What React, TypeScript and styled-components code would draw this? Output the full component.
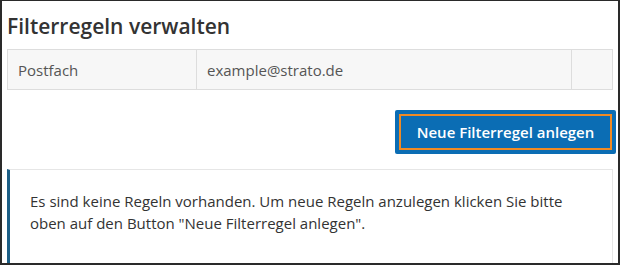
import styled, { createGlobalStyle } from 'styled-components';

const GlobalStyle = createGlobalStyle`
    html, body {
        margin: 0;
        padding: 0;
        background: #ffffff;
    }
`;

const Frame = styled.div`
    box-sizing: border-box;
    width: 620px;
    height: 265px;
    overflow: hidden;
    border: 2px solid #2a2a2a;
    border-top-width: 1px;
    padding: 0 5px 0 5px;
    font-family: 'Open Sans', 'DejaVu Sans', sans-serif;
    color: #333333;
    background: #ffffff;
`;

const Title = styled.h1`
    margin: 11px 0 0 0;
    font-size: 21px;
    line-height: 28px;
    font-weight: 600;
    color: #333333;
`;

const InfoTable = styled.div`
    display: grid;
    grid-template-columns: 189px 375px 1fr;
    margin-top: 9px;
    width: 606px;
    height: 41px;
    box-sizing: border-box;
    border: 1px solid #dddddd;
    background: #f7f7f7;
`;

const Cell = styled.div<{ $last?: boolean }>`
    display: flex;
    align-items: center;
    padding-left: 10px;
    font-size: 15px;
    color: #555555;
    border-right: ${(p) => (p.$last ? 'none' : '1px solid #dddddd')};
`;

const Actions = styled.div`
    display: flex;
    justify-content: flex-end;
    margin-top: 20px;
    margin-right: -3px;
`;

const PrimaryButton = styled.button`
    width: 221px;
    height: 44px;
    box-sizing: border-box;
    padding: 4px;
    border: none;
    border-radius: 2px;
    background: #0b6db4;
    cursor: pointer;

    span {
        display: flex;
        align-items: center;
        justify-content: center;
        height: 100%;
        box-sizing: border-box;
        border: 2px solid #f08a24;
        font-family: 'Open Sans', 'DejaVu Sans', sans-serif;
        font-size: 15px;
        font-weight: 600;
        color: #ffffff;
    }
`;

const Notice = styled.div`
    margin-top: 15px;
    width: 606px;
    height: 120px;
    box-sizing: border-box;
    border: 1px solid #e6e6e6;
    border-left: 3px solid #1d5f86;
    padding: 20px 20px 0 20px;
    font-size: 15px;
    line-height: 22px;
    color: #333333;
`;

export default function App() {
    return (
        <>
            <GlobalStyle />
            <Frame>
                <Title>Filterregeln verwalten</Title>
                <InfoTable>
                    <Cell>Postfach</Cell>
                    <Cell>example@strato.de</Cell>
                    <Cell $last />
                </InfoTable>
                <Actions>
                    <PrimaryButton>
                        <span>Neue Filterregel anlegen</span>
                    </PrimaryButton>
                </Actions>
                <Notice>
                    Es sind keine Regeln vorhanden. Um neue Regeln anzulegen klicken Sie bitte
                    <br />
                    oben auf den Button "Neue Filterregel anlegen".
                </Notice>
            </Frame>
        </>
    );
}
